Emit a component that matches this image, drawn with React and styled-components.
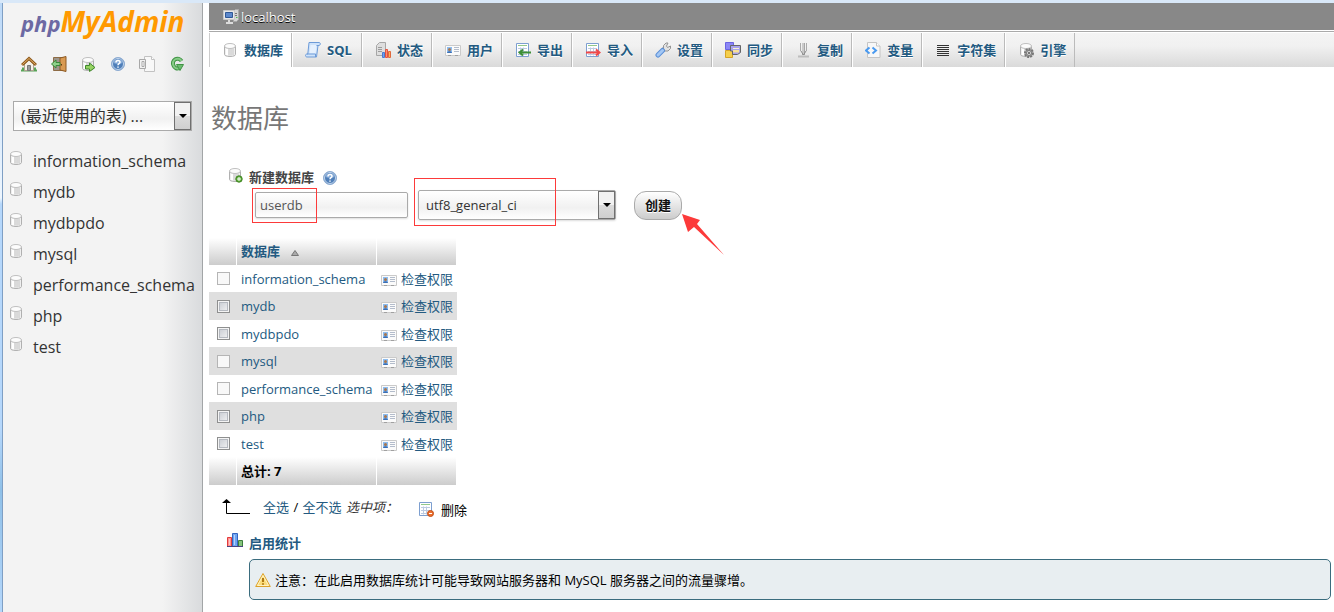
import React from "react";
import styled, { createGlobalStyle, css } from "styled-components";

// Colors
const linkBlue = "#235a81";
const barGray = "#888888";
const rowGray = "#dfdfdf";
const markRed = "#fc3a3a";

const GlobalStyle = createGlobalStyle`
  *,
  *::before,
  *::after {
    box-sizing: border-box;
  }

  body {
    margin: 0;
    background: #fff;
    color: #000;
    font-family: "Open Sans", "Noto Sans CJK SC", sans-serif;
    font-size: 13px;
    line-height: 20px;
  }

  a {
    color: ${linkBlue};
    text-decoration: none;
  }

  svg {
    display: block;
    flex: none;
  }

  input,
  select,
  button {
    margin: 0;
    font-family: inherit;
    font-size: 13px;
  }
`;

// Window frame
const Frame = styled.div`
  display: grid;
  grid-template-columns: 3px 200px minmax(0, 1fr);
  min-height: 100vh;
  border-top: 3px solid #a4bfdf;
  border-image: linear-gradient(#d9e8f8 0 66%, #98b4d6 66%) 3 0 0 0;
`;

const FrameEdge = styled.div`
  border-right: 1px solid #7f9fc4;
  background: linear-gradient(#bcd9f8, #eef6fe 32%, #b5d7fb 33%, #b5d7fb 70%, #8fc0e8 80%, #b5d7fb);
`;

// Sidebar
const Sidebar = styled.aside`
  border-right: 1px solid #a2a5a7;
  background: linear-gradient(to right, #f3f3f3 80%, #d9dbdd);
`;

const Logo = styled.a`
  display: flex;
  align-items: baseline;
  height: 38px;
  padding-left: 18px;
  font-weight: bold;
  font-style: italic;
  font-size: 28px;
  line-height: 36px;
  color: #f90;
`;

const LogoPhp = styled.span`
  font-size: 22px;
  color: #6c69a3;
`;

const QuickLinks = styled.nav`
  display: flex;
  justify-content: space-between;
  margin: 15px 17px 0 18px;
`;

const SelectWrap = styled.div`
  position: relative;
  width: ${(props) => props.$width}px;
  height: 30px;

  &::before {
    content: "";
    position: absolute;
    top: 1px;
    right: 1px;
    bottom: 1px;
    width: 17px;
    border: 1px solid #707070;
    background: linear-gradient(#f2f2f2 50%, #dcdcdc 50%, #cfcfcf);
    pointer-events: none;
  }

  &::after {
    content: "";
    position: absolute;
    top: 13px;
    right: 5px;
    border: 4px solid transparent;
    border-top-color: #000;
    border-bottom-width: 0;
    pointer-events: none;
  }
`;

const Select = styled.select`
  appearance: none;
  width: 100%;
  height: 30px;
  padding: 0 20px 0 7px;
  border: 1px solid #aaa;
  border-radius: ${(props) => (props.$large ? 0 : 2)}px;
  background: linear-gradient(#fff, #f1f1f1 60%, #fff);
  color: #333;
  font-size: ${(props) => (props.$large ? 16 : 13)}px;
  box-shadow: ${(props) => (props.$large ? "none" : "0 1px 2px #ddd")};
`;

const RecentTables = styled.div`
  margin: 29px 0 0 10px;
`;

const DbList = styled.ul`
  margin: 14px 0 0;
  padding: 0;
  list-style: none;
`;

const DbItem = styled.li`
  display: flex;
  height: 31px;
  padding: 5px 0 0 5px;
  gap: 9px;

  a {
    color: #333;
    font-size: 16px;
    line-height: 22px;
  }
`;

// Main panel
const Main = styled.main`
  padding-left: 6px;
`;

const ServerBar = styled.div`
  display: flex;
  align-items: center;
  gap: 2px;
  height: 27px;
  padding-left: 14px;
  background: ${barGray};

  a {
    color: #fff;
    text-shadow: 0 1px 0 #000;
  }
`;

const TabBar = styled.nav`
  display: flex;
  height: 36px;
  margin-top: 1px;
  padding-top: 1px;
  border-top: 1px solid #aaa;
  background: linear-gradient(#fff 1px, #f4f4f4 1px, #f1f1f1 40%, #dadada);
`;

const Tab = styled.a`
  display: flex;
  align-items: center;
  gap: 6px;
  min-width: 70px;
  padding: 0 8px 0 12px;
  border-left: 1px solid #fff;
  border-right: 1px solid #bbb;
  font-weight: bold;
  white-space: nowrap;
  text-shadow: 0 1px 0 #fff;

  ${(props) =>
    props.$active &&
    css`
      border-left-color: #ccc;
      background: #fff;
    `}
`;

const PageTitle = styled.h1`
  margin: 33px 0 0 2px;
  color: #777;
  font-size: 26px;
  font-weight: normal;
  line-height: 36px;
`;

const CreateForm = styled.form`
  margin: 31px 0 0 18px;
`;

const CreateLabel = styled.div`
  display: flex;
  gap: 6px;
  height: 20px;

  label {
    color: #444;
    font-weight: bold;
  }

  a {
    margin: 3px 0 0 2px;
  }
`;

const FieldRow = styled.div`
  display: flex;
  align-items: center;
  margin: 3px 0 0 28px;
`;

const Field = styled.div`
  position: relative;
  margin-right: ${(props) => props.$gap || 0}px;
`;

const TextInput = styled.input`
  display: block;
  width: 153px;
  height: 26px;
  padding: 0 4px;
  border: 1px solid #aaa;
  border-radius: 2px;
  background: linear-gradient(#fff, #f1f1f1 60%, #fff);
  color: #555;
  box-shadow: 0 1px 2px #ddd;
`;

const SubmitButton = styled.button`
  display: block;
  width: 48px;
  height: 29px;
  padding: 0 0 2px;
  border: 1px solid #aaa;
  border-radius: 12px;
  background: linear-gradient(#fff, #ccc);
  color: #111;
  font-weight: bold;
  text-shadow: 0 1px 0 #fff;
`;

// Red outline drawn over a form field
const Mark = styled.span`
  position: absolute;
  top: ${(props) => props.$top}px;
  left: ${(props) => props.$left}px;
  width: ${(props) => props.$width}px;
  height: ${(props) => props.$height}px;
  border: 1px solid ${markRed};
  pointer-events: none;
`;

const Pointer = styled.svg`
  position: absolute;
  top: 23px;
  left: 48px;
  pointer-events: none;
`;

// Database table
const DbTable = styled.table`
  width: 248px;
  margin-top: 18px;
  border-collapse: separate;
  border-spacing: 0;
  table-layout: fixed;

  th,
  td {
    padding: 0 0 0 4px;
    text-align: left;
    white-space: nowrap;
  }
`;

const BarRow = styled.tr`
  color: ${(props) => (props.$foot ? "#000" : linkBlue)};

  && > th,
  && > td {
    height: ${(props) => (props.$foot ? 28 : 27)}px;
    padding-bottom: ${(props) => (props.$foot ? 0 : 2)}px;
    border-right: 1px solid #fff;
    background: linear-gradient(#fff, #ccc);
    font-weight: bold;
  }
`;

const DbRow = styled.tr`
  background: ${(props) => (props.$even ? rowGray : "#fff")};

  && > td {
    height: ${(props) => (props.$even ? 28 : 27)}px;
  }
`;

const SortLink = styled.a`
  display: flex;
  align-items: center;
  gap: 11px;

  svg {
    margin-top: 4px;
  }
`;

const Check = styled.input`
  appearance: none;
  display: block;
  width: 13px;
  height: 13px;
  margin: 0 0 0 4px;
  border: 1px solid #8e8f8f;
  background: linear-gradient(135deg, #c4c8cf, #f6f6f6);
  box-shadow: inset 0 0 0 1px #f4f4f4, inset 0 0 0 2px #b5b9c0;

  &:disabled {
    border-color: #b5b5b5;
    background: #f8f8f8;
    box-shadow: none;
  }
`;

const PrivLink = styled.a`
  display: flex;
  align-items: center;
  gap: 4px;

  svg {
    margin-top: 2px;
  }
`;

const Actions = styled.div`
  display: flex;
  height: 22px;
  margin: 12px 0 0 13px;

  em {
    margin-left: 1px;
    color: #333;
  }
`;

const ActionLinks = styled.span`
  padding: 0 20px 0 13px;
`;

const Slash = styled.span`
  padding: 0 1px;
`;

const DeleteButton = styled.button`
  display: flex;
  align-items: center;
  gap: 7px;
  height: 24px;
  padding: 0;
  border: 0;
  background: none;
  color: #000;
`;

const StatsLink = styled.a`
  display: flex;
  gap: 6px;
  width: max-content;
  margin: 14px 0 0 18px;
  font-weight: bold;
`;

const Notice = styled.div`
  display: flex;
  align-items: center;
  gap: 4px;
  min-height: 41px;
  margin: 6px 3px 12px 40px;
  padding: 6px 5px;
  border: 1px solid #3a6c7e;
  border-radius: 5px;
  background: #e8eef1;
`;

// Icons
const Icon = ({ children }) => (
  <svg width="16" height="16" viewBox="0 0 16 16" fill="none" aria-hidden="true">
    {children}
  </svg>
);

const Cylinder = () => (
  <>
    <path d="M2.500 4v8.500c0 1 2 2 5.500 2s5.500-1 5.500-2V4z" fill="#efefef" stroke="#b0b0b0" />
    <path d="M7 7v6.500M9 7v6.500M11 6.500v6.500" stroke="#c4c4c4" />
    <path d="M5 7v6" stroke="#fff" strokeWidth="2" />
    <ellipse cx="8" cy="4" rx="5.500" ry="2.500" fill="#fcfcfc" stroke="#c0c0c0" />
  </>
);

const DbIcon = () => (
  <Icon>
    <Cylinder />
  </Icon>
);

const HomeIcon = () => (
  <Icon>
    <path d="M0 14.500h16M1 12.500h3M12 12.500h3" stroke="#58a458" strokeWidth="2" />
    <path d="M3.500 8v6.500h9V8L8 4z" fill="#f4f1ea" stroke="#b0a58f" />
    <path d="M6.500 14.500v-5h3v5z" fill="#9a9a9a" stroke="#777" />
    <path d="M1 9l7-6.500L15 9" stroke="#8f5a1c" strokeWidth="3" />
    <path d="M1.500 8.500L8 2.500l6.500 6" stroke="#e3b06a" />
  </Icon>
);

const ExitIcon = () => (
  <Icon>
    <path d="M2.500 1.500h11v13h-11z" fill="#9d968c" stroke="#8d6b45" />
    <path d="M9 2l6-1.500v15L9 14z" fill="#d99a52" stroke="#8d5a24" />
    <path d="M10.500 8v1.500" stroke="#5c3a14" />
    <path d="M.5 8l4.500-4v2.500h4v3H5V12z" fill="#8fd08a" stroke="#3b8a3b" />
  </Icon>
);

const QueryIcon = () => (
  <Icon>
    <Cylinder />
    <path d="M5.500 9.500h4V7l5.500 4.500-5.500 4v-2.500h-4z" fill="#97d264" stroke="#3e8a2a" />
  </Icon>
);

const HelpIcon = () => (
  <Icon>
    <circle cx="8" cy="8" r="6.500" fill="#4f7fb9" stroke="#8fadd3" />
    <circle cx="8" cy="8" r="5.500" stroke="#c3d6ec" />
    <path d="M3.500 7a4.600 4.600 0 019 0c-3 1.300-6 1.300-9 0z" fill="#86abd8" />
    <path d="M6 6.500c0-2.600 4-2.600 4-.3 0 1.500-2 1.500-2 3M8 10.500v1.300" stroke="#fff" strokeWidth="1.500" />
  </Icon>
);

const DocIcon = () => (
  <Icon>
    <path d="M5.500.5h7l3 3v12h-10z" fill="#f8f8f8" stroke="#c2c2c2" />
    <path d="M12.500.5v3h3" fill="#fff" stroke="#c2c2c2" />
    <path d="M.5 3.500h6v9h-6z" fill="#f2f2f2" stroke="#a8a8a8" />
    <path d="M3 5.500h2v5H3z" fill="#fff" stroke="#a8a8a8" />
  </Icon>
);

const ReloadIcon = () => (
  <Icon>
    <path d="M12.500 5A4.300 4.300 0 104.500 9.500c.8 2.500 3.500 3.500 5.500 2.500" stroke="#3f9344" strokeWidth="4" />
    <path d="M12.500 5A4.300 4.300 0 104.500 9.500c.8 2.500 3.500 3.500 5.500 2.500" stroke="#86cb86" strokeWidth="2" />
    <path d="M7.500 8.500h7l-3.500 6z" fill="#6cbc6f" stroke="#3f9344" />
  </Icon>
);

const ServerIcon = () => (
  <Icon>
    <path d="M10.500 2.500l2-2h3v10l-2 2h-3z" fill="#d6d6d6" stroke="#aaa" />
    <path d="M11 4.500h3M11 6.500h3" stroke="#777" />
    <path d="M13 8.500h1.500" stroke="#4fc04f" />
    <path d="M.5 1.500h11v9H.5z" fill="#e8e8e8" stroke="#c9c9c9" />
    <path d="M2.500 3.500h7v5h-7z" fill="#5c88cc" stroke="#2f5896" />
    <path d="M6 11v2.500M3 14h7" stroke="#dcdcdc" strokeWidth="2" />
  </Icon>
);

const SqlIcon = () => (
  <Icon>
    <path d="M4 .5h10c2 0 1.500 3 0 3h-1l-1.500 11.500H2c-2 0-2-3 0-3h.8z" fill="#cfe3fa" stroke="#6d9bd8" />
    <path d="M5.500 3h6l-1 8.500h-6z" fill="#e6f1fe" />
    <path d="M2 12h8.500v3M13 3.500h-1.500" stroke="#6d9bd8" />
  </Icon>
);

const StatusIcon = () => (
  <Icon>
    <path d="M1.500 3.500l3-3h6v11l-2 2h-7z" fill="#dedede" stroke="#a6a6a6" />
    <path d="M3 5.500h4M3 7.500h4M3 9.500h4" stroke="#9b9b9b" />
    <path d="M7.500 10.500h2v5h-2z" fill="#6fa0f0" stroke="#4a7bd0" />
    <path d="M10.500 7.500h2v8h-2z" fill="#ff8b70" stroke="#e5533c" />
    <path d="M13.500 9.500h2v6h-2z" fill="#f7b25a" stroke="#e0683c" />
  </Icon>
);

const UserIcon = () => (
  <Icon>
    <path d="M.5 3.500h15v10H.5z" fill="#fbfbfb" stroke="#cacaca" />
    <path d="M2 5h5v6H2z" fill="#8dbdf0" />
    <path d="M2 11c.5-2.500 4.500-2.500 5 0z" fill="#3b6fb5" />
    <circle cx="4.500" cy="7.500" r="1.500" fill="#a8764e" />
    <path d="M9 5.500h5M9 7.500h5M9 9.500h5" stroke="#b3bccb" />
    <path d="M3 13.500h3M10 13.500h3" stroke="#a0a0a0" />
  </Icon>
);

const Sheet = () => (
  <>
    <path d="M1.500 1.500h12v13h-12z" fill="#fff" stroke="#7d9fd0" />
    <path d="M3 3.500h9" stroke="#93c98b" />
    <path d="M3 6.500h9M3 9.500h9M3 12.500h9M5.500 5.500v8M8.500 5.500v8" stroke="#bccbe2" />
  </>
);

const ExportIcon = () => (
  <Icon>
    <Sheet />
    <path d="M16 10.500H5M8 7.500l-3.500 3 3.500 3" stroke="#3d8f37" strokeWidth="2" />
  </Icon>
);

const ImportIcon = () => (
  <Icon>
    <Sheet />
    <path d="M1 10.500h13M11 7.500l3.500 3-3.500 3" stroke="#f04848" strokeWidth="2" />
  </Icon>
);

const WrenchIcon = () => (
  <Icon>
    <path d="M8 8l3-3" stroke="#8d8d8d" strokeWidth="4" />
    <path d="M8.500 6.500V3.500L11 1h2L11.500 4l1 1.500L15.500 4v2.500L13 9H9.500z" fill="#e2e2e2" stroke="#949494" />
    <path d="M3 13l4.500-4.500" stroke="#5b8fd6" strokeWidth="5" strokeLinecap="round" />
    <path d="M3 13l4.500-4.500" stroke="#a3c7f4" strokeWidth="3" strokeLinecap="round" />
  </Icon>
);

const SyncIcon = () => (
  <Icon>
    <path d="M.5.500h8v7h-8z" fill="#8c87f5" stroke="#6a63e2" />
    <path d="M.5 8.500h7v7h-7z" fill="#f5cf4c" stroke="#d5a326" />
    <path d="M5.500 3.500h10v7l-3 2h-5V9h-2z" fill="#a9a3ec" stroke="#666" />
    <path d="M8 8h6v2.500H8z" fill="#f6e09a" />
    <path d="M8 6.500h6" stroke="#f7f2d0" />
  </Icon>
);

const ReplicationIcon = () => (
  <Icon>
    <path d="M5.500 1v8M11.500 1v8" stroke="#aaa" />
    <path d="M8.500 1v12" stroke="#a6a6a6" strokeWidth="3" />
    <path d="M8 1v11" stroke="#eee" />
    <path d="M6 9l2.500 4L11 9" stroke="#8c8c8c" />
    <path d="M3 14.500h11" stroke="#bdbdbd" strokeWidth="2" />
  </Icon>
);

const VarsIcon = () => (
  <Icon>
    <path d="M2.500.5h9l3.500 3.500v11.500H2.500z" fill="#f7f7f7" stroke="#c4c4c4" />
    <path d="M11.500.5V4H15" fill="#fff" stroke="#c4c4c4" />
    <path d="M4.500 5.500L1 8.500l3.500 3M7.500 5.500l3.500 3-3.500 3" stroke="#4a9af0" strokeWidth="2" />
  </Icon>
);

const CharsetIcon = () => (
  <Icon>
    <path d="M2 3.500h12M2 5.500h12M2 7.500h12M2 9.500h12M2 11.500h12M2 13.500h12" stroke="#333" />
  </Icon>
);

const EngineIcon = () => (
  <Icon>
    <Cylinder />
    <circle cx="11" cy="11" r="4" fill="#aaa" stroke="#777" strokeWidth="2" strokeDasharray="2 1" />
    <circle cx="11" cy="11" r="2.500" fill="#ddd" stroke="#777" />
    <circle cx="11" cy="11" r="1" fill="#555" />
  </Icon>
);

const NewDbIcon = () => (
  <Icon>
    <Cylinder />
    <circle cx="12" cy="12" r="3.200" fill="#5fae3b" stroke="#3e8222" />
    <path d="M10 12h4M12 10v4" stroke="#fff" />
  </Icon>
);

const DeleteIcon = () => (
  <Icon>
    <Sheet />
    <circle cx="12.500" cy="12.500" r="3" fill="#ee6f2d" stroke="#c0501a" />
    <path d="M11 12.500h3" stroke="#fff" />
  </Icon>
);

const StatsIcon = () => (
  <Icon>
    <path d="M.5 4.500h4v9h-4z" fill="#ff8f8f" stroke="#e23b3b" />
    <path d="M2.500 6v6" stroke="#ffc4c4" />
    <path d="M5.500.5h5v13h-5z" fill="#6ea4f2" stroke="#3465c0" />
    <path d="M7.500 2v10" stroke="#b4d2fb" />
    <path d="M11.500 7.500h4v6h-4z" fill="#86c47c" stroke="#3c7d3c" />
    <path d="M0 13.500h16" stroke="#4a4280" />
  </Icon>
);

const WarningIcon = () => (
  <Icon>
    <path d="M8 1.500l7.300 13H.7z" fill="#fbdc78" stroke="#dda22b" strokeLinejoin="round" />
    <path d="M8 3.500l5.500 10h-11z" stroke="#fff3c4" />
    <path d="M8 6v4M8 11.200v1.600" stroke="#b07a14" strokeWidth="2" />
  </Icon>
);

const SortIcon = () => (
  <svg width="8" height="6" viewBox="0 0 8 6" aria-hidden="true">
    <path d="M4 0.500L7.500 5.500h-7z" fill="#aaa" stroke="#777" />
  </svg>
);

const SelectArrow = () => (
  <svg width="28" height="18" viewBox="0 0 28 18" fill="none" aria-hidden="true">
    <path d="M4.500 4v12.500H28" stroke="#000" />
    <path d="M4.500 2L9 6H0z" fill="#000" />
  </svg>
);

const quickLinks = [
  { label: "主页", icon: HomeIcon },
  { label: "退出", icon: ExitIcon },
  { label: "查询窗口", icon: QueryIcon },
  { label: "phpMyAdmin 文档", icon: HelpIcon },
  { label: "文档", icon: DocIcon },
  { label: "重新载入", icon: ReloadIcon },
];

const tabs = [
  { label: "数据库", icon: DbIcon },
  { label: "SQL", icon: SqlIcon },
  { label: "状态", icon: StatusIcon },
  { label: "用户", icon: UserIcon },
  { label: "导出", icon: ExportIcon },
  { label: "导入", icon: ImportIcon },
  { label: "设置", icon: WrenchIcon },
  { label: "同步", icon: SyncIcon },
  { label: "复制", icon: ReplicationIcon },
  { label: "变量", icon: VarsIcon },
  { label: "字符集", icon: CharsetIcon },
  { label: "引擎", icon: EngineIcon },
];

const databases = [
  { name: "information_schema", system: true },
  { name: "mydb" },
  { name: "mydbpdo" },
  { name: "mysql", system: true },
  { name: "performance_schema", system: true },
  { name: "php" },
  { name: "test" },
];

const App = () => {
  return (
    <>
      <GlobalStyle />
      <Frame>
        <FrameEdge />
        <Sidebar>
          <Logo href="#home">
            <LogoPhp>php</LogoPhp>MyAdmin
          </Logo>
          <QuickLinks>
            {quickLinks.map(({ label, icon: LinkIcon }) => (
              <a key={label} href="#quick" aria-label={label}>
                <LinkIcon />
              </a>
            ))}
          </QuickLinks>
          <RecentTables>
            <SelectWrap $width={179}>
              <Select $large aria-label="最近使用的表">
                <option>(最近使用的表) ...</option>
              </Select>
            </SelectWrap>
          </RecentTables>
          <DbList>
            {databases.map((db) => (
              <DbItem key={db.name}>
                <DbIcon />
                <a href={`#${db.name}`}>{db.name}</a>
              </DbItem>
            ))}
          </DbList>
        </Sidebar>

        <Main>
          <ServerBar>
            <ServerIcon />
            <a href="#server">localhost</a>
          </ServerBar>
          <TabBar>
            {tabs.map(({ label, icon: TabIcon }, i) => (
              <Tab key={label} href="#tab" $active={i === 0}>
                <TabIcon />
                {label}
              </Tab>
            ))}
          </TabBar>

          <PageTitle>数据库</PageTitle>

          <CreateForm onSubmit={(e) => e.preventDefault()}>
            <CreateLabel>
              <NewDbIcon />
              <label htmlFor="new_db">新建数据库</label>
              <a href="#help" aria-label="帮助">
                <HelpIcon />
              </a>
            </CreateLabel>
            <FieldRow>
              <Field $gap={10}>
                <TextInput id="new_db" type="text" defaultValue="userdb" />
                <Mark $top={-4} $left={-3} $width={65} $height={35} />
              </Field>
              <Field $gap={18}>
                <SelectWrap $width={198}>
                  <Select aria-label="整理">
                    <option>utf8_general_ci</option>
                  </Select>
                </SelectWrap>
                <Mark $top={-12} $left={-4} $width={142} $height={48} />
              </Field>
              <Field>
                <SubmitButton type="submit">创建</SubmitButton>
                <Pointer width="43" height="42" viewBox="0 0 43 42">
                  <path d="M0 0L18 6L15 10L42 41L12 13L6 18Z" fill={markRed} />
                </Pointer>
              </Field>
            </FieldRow>
          </CreateForm>

          <DbTable>
            <colgroup>
              <col width="28" />
              <col width="140" />
              <col width="80" />
            </colgroup>
            <thead>
              <BarRow>
                <th />
                <th>
                  <SortLink href="#sort">
                    数据库
                    <SortIcon />
                  </SortLink>
                </th>
                <th />
              </BarRow>
            </thead>
            <tbody>
              {databases.map((db, i) => (
                <DbRow key={db.name} $even={i % 2 === 1}>
                  <td>
                    <Check type="checkbox" aria-label={db.name} disabled={db.system} />
                  </td>
                  <td>
                    <a href={`#${db.name}`}>{db.name}</a>
                  </td>
                  <td>
                    <PrivLink href="#privileges">
                      <UserIcon />
                      检查权限
                    </PrivLink>
                  </td>
                </DbRow>
              ))}
            </tbody>
            <tfoot>
              <BarRow $foot>
                <td />
                <td>总计: {databases.length}</td>
                <td />
              </BarRow>
            </tfoot>
          </DbTable>

          <Actions>
            <SelectArrow />
            <ActionLinks>
              <a href="#all">全选</a>
              <Slash> / </Slash>
              <a href="#none">全不选</a> <em>选中项：</em>
            </ActionLinks>
            <DeleteButton type="button">
              <DeleteIcon />
              删除
            </DeleteButton>
          </Actions>

          <StatsLink href="#stats">
            <StatsIcon />
            启用统计
          </StatsLink>
          <Notice>
            <WarningIcon />
            注意：在此启用数据库统计可能导致网站服务器和 MySQL 服务器之间的流量骤增。
          </Notice>
        </Main>
      </Frame>
    </>
  );
};

export default App;
